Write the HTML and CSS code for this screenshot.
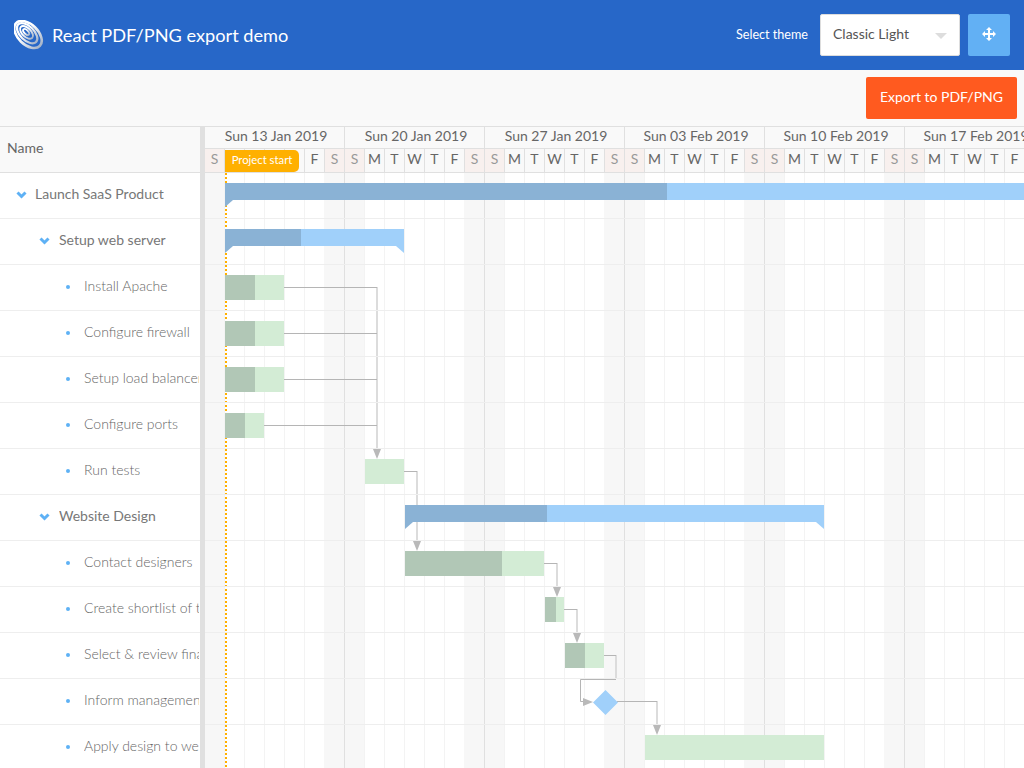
FILE: index.html
```html
<!DOCTYPE html>
<html lang="en">
<head>
  <meta charset="UTF-8">
  <title>React PDF/PNG export demo</title>
  <link rel="stylesheet" href="styles.css">
</head>
<body>

  <header class="topbar">
    <svg class="logo" width="30" height="30" viewBox="0 0 30 30">
      <defs>
        <linearGradient id="logoShade" x1="0" y1="0" x2="1" y2="0">
          <stop offset="0.4" stop-color="#ffffff"/>
          <stop offset="1" stop-color="#a8b6ca"/>
        </linearGradient>
      </defs>
      <g fill="none" stroke="url(#logoShade)" transform="rotate(44 14 14.5)">
        <ellipse cx="14" cy="14.5" rx="16.5" ry="10" stroke-width="2.6"/>
        <ellipse cx="12.5" cy="14.2" rx="12.5" ry="7" stroke-width="2.2"/>
        <ellipse cx="11.5" cy="14" rx="8" ry="4.4" stroke-width="1.9"/>
        <ellipse cx="11" cy="14" rx="3.8" ry="2" stroke-width="1.8"/>
      </g>
    </svg>
    <h1 class="title">React PDF/PNG export demo</h1>
    <span class="theme-label">Select theme</span>
    <div class="theme-select">Classic Light<i class="caret"></i></div>
    <button class="move-btn" type="button">
      <svg width="14" height="14" viewBox="0 0 14 14">
        <path fill="#fff" d="M7 0L10 3H8V6H11V4L14 7L11 10V8H8V11H10L7 14L4 11H6V8H3V10L0 7L3 4V6H6V3H4Z"/>
      </svg>
    </button>
  </header>

  <div class="toolbar">
    <button class="export-btn" type="button">Export to PDF/PNG</button>
  </div>

  <main class="gantt">
    <section class="tree">
      <div class="tree-head">Name</div>
      <div class="tree-row level-0">
        <svg class="chevron" width="11" height="8" viewBox="0 0 11 8"><path d="M1.5 1.5l4 4 4-4"/></svg>
        <span class="summary-name">Launch SaaS Product</span>
      </div>
      <div class="tree-row level-1">
        <svg class="chevron" width="11" height="8" viewBox="0 0 11 8"><path d="M1.5 1.5l4 4 4-4"/></svg>
        <span class="summary-name">Setup web server</span>
      </div>
      <div class="tree-row level-2"><i class="dot"></i><span>Install Apache</span></div>
      <div class="tree-row level-2"><i class="dot"></i><span>Configure firewall</span></div>
      <div class="tree-row level-2"><i class="dot"></i><span>Setup load balancer</span></div>
      <div class="tree-row level-2"><i class="dot"></i><span>Configure ports</span></div>
      <div class="tree-row level-2"><i class="dot"></i><span>Run tests</span></div>
      <div class="tree-row level-1">
        <svg class="chevron" width="11" height="8" viewBox="0 0 11 8"><path d="M1.5 1.5l4 4 4-4"/></svg>
        <span class="summary-name">Website Design</span>
      </div>
      <div class="tree-row level-2"><i class="dot"></i><span>Contact designers</span></div>
      <div class="tree-row level-2"><i class="dot"></i><span>Create shortlist of three designers</span></div>
      <div class="tree-row level-2"><i class="dot"></i><span>Select &amp; review final design</span></div>
      <div class="tree-row level-2"><i class="dot"></i><span>Inform management about decision</span></div>
      <div class="tree-row level-2"><i class="dot"></i><span>Apply design to website</span></div>
    </section>

    <div class="splitter"></div>

    <section class="timeline">
      <div class="weeks">
        <div class="week">
          <div class="week-label">Sun 13 Jan 2019</div>
          <div class="days">
            <span class="day off">S</span><span class="day"></span><span class="day"></span><span class="day"></span><span class="day"></span><span class="day">F</span><span class="day off">S</span>
          </div>
        </div>
        <div class="week">
          <div class="week-label">Sun 20 Jan 2019</div>
          <div class="days">
            <span class="day off">S</span><span class="day">M</span><span class="day">T</span><span class="day">W</span><span class="day">T</span><span class="day">F</span><span class="day off">S</span>
          </div>
        </div>
        <div class="week">
          <div class="week-label">Sun 27 Jan 2019</div>
          <div class="days">
            <span class="day off">S</span><span class="day">M</span><span class="day">T</span><span class="day">W</span><span class="day">T</span><span class="day">F</span><span class="day off">S</span>
          </div>
        </div>
        <div class="week">
          <div class="week-label">Sun 03 Feb 2019</div>
          <div class="days">
            <span class="day off">S</span><span class="day">M</span><span class="day">T</span><span class="day">W</span><span class="day">T</span><span class="day">F</span><span class="day off">S</span>
          </div>
        </div>
        <div class="week">
          <div class="week-label">Sun 10 Feb 2019</div>
          <div class="days">
            <span class="day off">S</span><span class="day">M</span><span class="day">T</span><span class="day">W</span><span class="day">T</span><span class="day">F</span><span class="day off">S</span>
          </div>
        </div>
        <div class="week">
          <div class="week-label">Sun 17 Feb 2019</div>
          <div class="days">
            <span class="day off">S</span><span class="day">M</span><span class="day">T</span><span class="day">W</span><span class="day">T</span><span class="day">F</span><span class="day off">S</span>
          </div>
        </div>
        <div class="marker-tag">Project start</div>
      </div>

      <div class="chart">
        <div class="marker-line"></div>

        <!-- dependency lines, in page coordinates -->
        <svg class="links" width="819" height="598" viewBox="205 173 819 598">
          <g class="link-v">
            <path d="M377 287V450"/>
            <path d="M417 471V542"/>
            <path d="M557 563V588"/>
            <path d="M577 609V634"/>
            <path d="M616 655V679"/>
            <path d="M657 701V726"/>
          </g>
          <g class="link-h">
            <path d="M284 287.5H377"/>
            <path d="M284 333.5H377"/>
            <path d="M284 379.5H377"/>
            <path d="M264 425.5H377"/>
            <path d="M404 471.5H417"/>
            <path d="M544 563.5H557"/>
            <path d="M564 609.5H577"/>
            <path d="M604 655.5H616"/>
            <path d="M616 679.5H580.5V701.5H584"/>
            <path d="M617 701.5H657"/>
          </g>
          <g class="link-head">
            <path d="M373 449h8l-4 10z"/>
            <path d="M413 541h8l-4 10z"/>
            <path d="M553 587h8l-4 10z"/>
            <path d="M573 633h8l-4 10z"/>
            <path d="M583 698v8l10-4z"/>
            <path d="M653 725h8l-4 10z"/>
          </g>
        </svg>

        <div class="row">
          <div class="bar summary notch-left" style="left: 20px; width: 830px"><div class="fill" style="width: 442px"></div></div>
        </div>
        <div class="row">
          <div class="bar summary notch-left notch-right" style="left: 20px; width: 179px"><div class="fill" style="width: 76px"></div></div>
        </div>
        <div class="row">
          <div class="bar task" style="left: 20px; width: 59px"><div class="fill" style="width: 30px"></div></div>
        </div>
        <div class="row">
          <div class="bar task" style="left: 20px; width: 59px"><div class="fill" style="width: 30px"></div></div>
        </div>
        <div class="row">
          <div class="bar task" style="left: 20px; width: 59px"><div class="fill" style="width: 30px"></div></div>
        </div>
        <div class="row">
          <div class="bar task" style="left: 20px; width: 39px"><div class="fill" style="width: 20px"></div></div>
        </div>
        <div class="row">
          <div class="bar task" style="left: 160px; width: 39px"></div>
        </div>
        <div class="row">
          <div class="bar summary notch-left notch-right" style="left: 200px; width: 419px"><div class="fill" style="width: 142px"></div></div>
        </div>
        <div class="row">
          <div class="bar task" style="left: 200px; width: 139px"><div class="fill" style="width: 97px"></div></div>
        </div>
        <div class="row">
          <div class="bar task" style="left: 340px; width: 19px"><div class="fill" style="width: 11px"></div></div>
        </div>
        <div class="row">
          <div class="bar task" style="left: 360px; width: 39px"><div class="fill" style="width: 20px"></div></div>
        </div>
        <div class="row">
          <div class="milestone" style="left: 388px"></div>
        </div>
        <div class="row">
          <div class="bar task" style="left: 440px; width: 179px"></div>
        </div>
      </div>
    </section>
  </main>

</body>
</html>
```

FILE: styles.css
```css
html, body {
  height: 100%;
}

body {
  margin: 0;
  display: flex;
  flex-direction: column;
  overflow: hidden;
  font-family: "Lato", "Liberation Sans", sans-serif;
  font-size: 14px;
  color: #666;
  background-color: #fff;
}

/* top bar */
.topbar {
  flex: none;
  height: 70px;
  display: flex;
  align-items: center;
  padding: 0 14px;
  box-sizing: border-box;
  background-color: #2767c8;
  color: #fff;
}

.logo {
  flex: none;
  margin-right: 8px;
}

.title {
  flex: 1;
  margin: 0;
  font-size: 18.2px;
  font-weight: 400;
  line-height: 68px;
}

.theme-label {
  margin-right: 12px;
  font-size: 12.6px;
  padding-bottom: 2px;
}

.theme-select {
  position: relative;
  width: 140px;
  height: 42px;
  padding-left: 12px;
  box-sizing: border-box;
  line-height: 37px;
  background-color: #fff;
  border: 1px solid #ddd;
  border-radius: 2px;
  color: #555;
}

.caret {
  position: absolute;
  top: 18px;
  right: 12px;
  border-left: 6px solid transparent;
  border-right: 6px solid transparent;
  border-top: 6px solid #ddd;
}

.move-btn {
  width: 42px;
  height: 42px;
  margin-left: 8px;
  padding: 0 0 2px;
  display: flex;
  align-items: center;
  justify-content: center;
  background-color: #62b0f4;
  border: none;
  border-radius: 2px;
}

/* export row */
.toolbar {
  flex: none;
  height: 56px;
  display: flex;
  justify-content: flex-end;
  align-items: flex-start;
  padding: 7px 7px 0 0;
  box-sizing: border-box;
  background-color: #f9f9f9;
}

.export-btn {
  width: 151px;
  height: 42px;
  padding: 0 0 4px;
  font-family: inherit;
  font-size: 14px;
  color: #fff;
  background-color: #ff5a1f;
  border: none;
  border-radius: 2px;
}

/* gantt */
.gantt {
  flex: 1;
  min-height: 0;
  display: flex;
  overflow: hidden;
  border-top: 1px solid #e0e0e0;
}

.tree {
  flex: none;
  width: 200px;
  overflow: hidden;
}

.tree-head {
  height: 45px;
  padding-left: 7px;
  line-height: 41px;
  background-color: #f9f9f9;
  border-bottom: 1px solid #e0e0e0;
}

.tree-row {
  height: 46px;
  padding: 0 1px 4px 0;
  box-sizing: border-box;
  display: flex;
  align-items: center;
  white-space: nowrap;
  border-bottom: 1px solid #eee;
  font-weight: 300;
  color: #666;
}

.tree-row span {
  overflow: hidden;
}

.summary-name {
  font-weight: 400;
  color: #777;
}

.level-0 {
  padding-left: 16px;
}

.level-1 {
  padding-left: 39px;
}

.level-2 {
  padding-left: 66px;
}

.chevron {
  flex: none;
  margin: 3px 8px 0 0;
}

.chevron path {
  fill: none;
  stroke: #5eb1f5;
  stroke-width: 3;
}

.level-1 .chevron {
  margin-right: 9px;
}

.dot {
  flex: none;
  width: 4px;
  height: 4px;
  margin: 3px 14px 0 0;
  border-radius: 50%;
  background-color: #5eb1f5;
}

.splitter {
  flex: none;
  width: 5px;
  background-color: #e0e0e0;
}

.timeline {
  flex: 1;
  min-width: 0;
  overflow: hidden;
}

.weeks {
  position: relative;
  display: flex;
  width: 840px;
  height: 45px;
  background-color: #f9f9f9;
  border-bottom: 1px solid #e0e0e0;
}

.week {
  flex: none;
  width: 140px;
}

.week-label {
  height: 22px;
  padding-left: 3px;
  line-height: 18px;
  text-align: center;
  white-space: nowrap;
  border-right: 1px solid #e0e0e0;
  border-bottom: 1px solid #e0e0e0;
  box-sizing: border-box;
}

.days {
  display: flex;
  height: 23px;
}

.day {
  flex: none;
  width: 20px;
  box-sizing: border-box;
  line-height: 19px;
  text-align: center;
  border-right: 1px solid #e0e0e0;
}

.day.off {
  color: #999;
  background-color: #f8f0ee;
}

.marker-tag {
  position: absolute;
  top: 23px;
  left: 20px;
  width: 74px;
  height: 22px;
  line-height: 20px;
  text-align: center;
  font-size: 11.3px;
  color: #fff;
  background-color: #ffb000;
  border-radius: 0 5px 5px 0;
}

/* weekend bands and the week line repeat every 140px, day lines every 20px */
.chart {
  position: relative;
  width: 819px;
  height: 598px;
  overflow: hidden;
  background-image:
    linear-gradient(to right, #f7f7f7 0 19px, transparent 19px 119px, #f7f7f7 119px 139px, #e0e0e0 139px 140px),
    linear-gradient(to right, transparent 0 19px, #f3f3f3 19px 20px);
  background-size: 140px 100%, 20px 100%;
  background-repeat: repeat-x;
}

.marker-line {
  position: absolute;
  top: 0;
  bottom: 0;
  left: 20px;
  width: 2px;
  background-image: repeating-linear-gradient(#ffb000 0 2px, transparent 2px 4px);
}

.links {
  position: absolute;
  top: 0;
  left: 0;
}

.link-v path {
  fill: none;
  stroke: #dcdcdc;
  stroke-width: 2;
}

.link-h path {
  fill: none;
  stroke: #b5b5b5;
  stroke-width: 1;
}

.link-head path {
  fill: #b9b9b9;
}

.row {
  position: relative;
  height: 45px;
  border-bottom: 1px solid #eee;
}

.bar {
  position: absolute;
  top: 10px;
}

.fill {
  height: 100%;
}

.summary {
  height: 17px;
  background-color: #a0d0fa;
}

.summary .fill {
  background-color: #8ab2d5;
}

.task {
  height: 25px;
  background-color: #d3ecd5;
}

.task .fill {
  background-color: #b1c7b6;
}

.notch-left::before,
.notch-right::after {
  content: "";
  position: absolute;
  top: 100%;
  border-top: 7px solid;
  border-right: 8px solid transparent;
}

.notch-left::before {
  left: 0;
  color: #8ab2d5;
}

.notch-right::after {
  right: 0;
  color: #a0d0fa;
  border-right: none;
  border-left: 8px solid transparent;
}

.milestone {
  position: absolute;
  top: 11px;
  width: 25px;
  height: 25px;
  background-color: #a0d0fa;
  clip-path: polygon(50% 0, 100% 50%, 50% 100%, 0 50%);
}
```
